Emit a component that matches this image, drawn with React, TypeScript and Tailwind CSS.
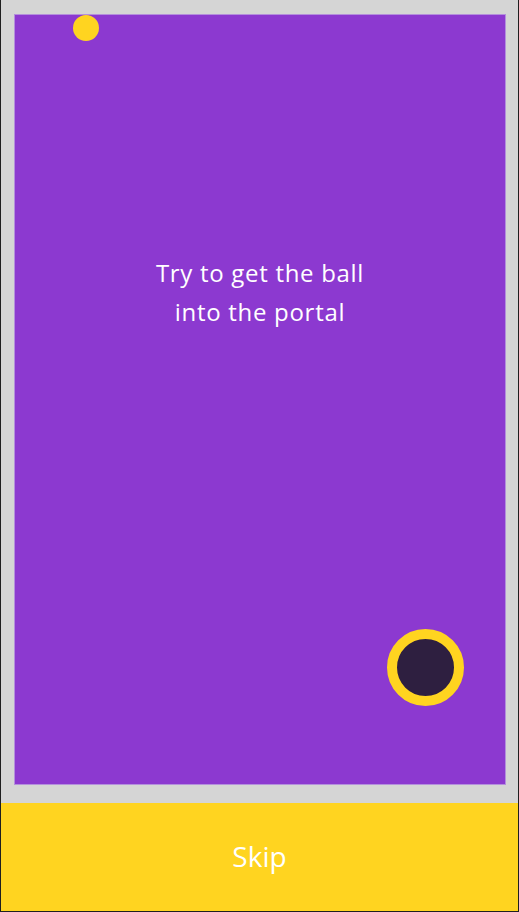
export default function App() {
  return (
    <div
      className="w-[519px] h-[912px] flex flex-col border-x border-b border-[#1f1f1f] bg-[#d5d5d5]"
      style={{ fontFamily: '"Open Sans", "Noto Sans", sans-serif' }}
    >
      {/* Play field */}
      <div className="flex-1 pt-[14px] pl-[13px] pr-[12px] pb-[18px]">
        <div className="relative h-full border border-[#b48fdc] bg-[#8c39d0] overflow-hidden">
          {/* ball */}
          <div className="absolute left-[58px] top-0 w-[26px] h-[26px] rounded-full bg-[#ffd420]" />

          <p className="pt-[238px] text-center text-[24px] leading-[39px] tracking-[0.7px] text-white">
            Try to get the ball
            <br />
            into the portal
          </p>

          {/* portal */}
          <div className="absolute left-[372px] top-[614px] w-[77px] h-[77px] rounded-full border-[10px] border-[#ffd420] bg-[#2e1f40]" />
        </div>
      </div>

      {/* Skip */}
      <button className="h-[108px] w-full shrink-0 pb-[3px] bg-[#ffd420] text-[28px] text-white">
        Skip
      </button>
    </div>
  );
}
